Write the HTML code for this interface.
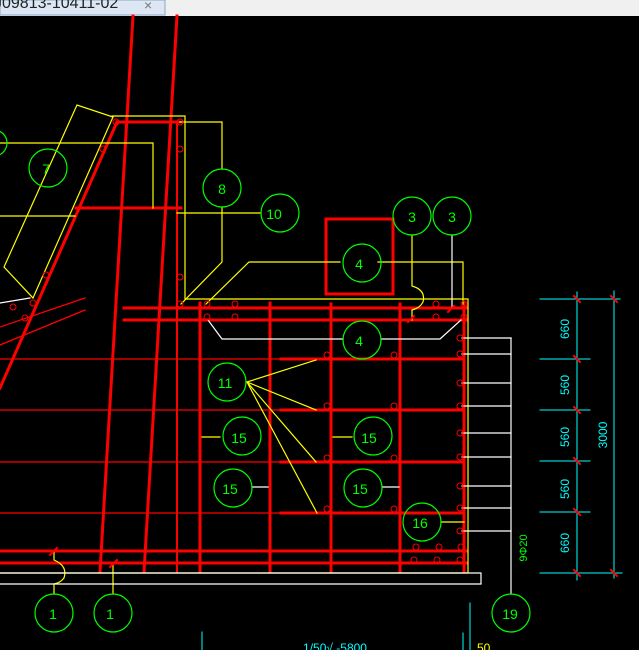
<!DOCTYPE html>
<html><head><meta charset="utf-8"><style>
html,body{margin:0;padding:0;background:#000;width:639px;height:650px;overflow:hidden}
svg{display:block}
text{font-family:"Liberation Sans",sans-serif}
</style></head><body>
<svg width="639" height="650" viewBox="0 0 639 650" xmlns="http://www.w3.org/2000/svg">
<rect x="0" y="0" width="639" height="650" fill="#000"/>
<rect x="0" y="0" width="639" height="16" fill="#f0f0f0"/>
<rect x="0" y="0" width="165" height="15" fill="#dce7f3" stroke="#8aa6c8"/>
<text x="-6" y="8" font-size="16" fill="#222" font-family="Liberation Mono,monospace">J09813-10411-02</text>
<text x="144" y="10" font-size="14" fill="#777">×</text>

<g fill="none" stroke-linecap="square">
<g stroke="#ff0000" stroke-width="1.3">
<line x1="0" y1="359" x2="283" y2="359"/>
<line x1="0" y1="410" x2="464" y2="410"/>
<line x1="0" y1="462" x2="464" y2="462"/>
<line x1="0" y1="513" x2="464" y2="513"/>
<line x1="0" y1="327" x2="85" y2="298"/>
<line x1="0" y1="345" x2="85" y2="310"/>
</g>
<g stroke="#ff0000" stroke-width="3">
<line x1="133" y1="16" x2="100" y2="572"/>
<line x1="177" y1="16" x2="144" y2="572"/>
<line x1="117" y1="122" x2="0" y2="388"/>
<line x1="117" y1="122" x2="180" y2="122"/>
<line x1="76" y1="208" x2="181" y2="208"/>
<line x1="124" y1="308" x2="466" y2="308"/>
<line x1="124" y1="320" x2="466" y2="320"/>
<line x1="281" y1="359" x2="464" y2="359"/>
<line x1="281" y1="410" x2="464" y2="410"/>
<line x1="281" y1="462" x2="464" y2="462"/>
<line x1="281" y1="513" x2="464" y2="513"/>
<line x1="0" y1="551" x2="466" y2="551"/>
<line x1="0" y1="563" x2="466" y2="563"/>
<line x1="200" y1="303" x2="200" y2="572"/>
<line x1="270" y1="303" x2="270" y2="572"/>
<line x1="331" y1="304" x2="331" y2="572"/>
<line x1="400" y1="304" x2="400" y2="571"/>
<line x1="464" y1="302" x2="464" y2="572"/>
<rect x="326" y="219" width="67" height="75"/>
</g>
<g stroke="#ff0000" stroke-width="2">
<line x1="177" y1="122" x2="177" y2="572"/>
</g>
<g stroke="#ffff00" stroke-width="1.2">
<polyline points="113,117 77,105 4,267 33,298"/>
<line x1="113" y1="117" x2="33" y2="298"/>
<polyline points="112,116 185,116 185,299 468,299 468,572"/>
<polyline points="0,143 153,143 153,208"/>
<line x1="0" y1="216" x2="75" y2="216"/>
<polyline points="180,122 222,122 222,169"/>
<polyline points="222,207 222,262 181,304"/>
<line x1="177" y1="213" x2="261" y2="213"/>
<polyline points="206,304 249,262 340,262"/>
<polyline points="378,262 463,262 463,304"/>
<path d="M412,235 V286 Q426,290 423,302 Q420,308 412,310 V320"/>
<line x1="247" y1="382" x2="316" y2="360"/>
<line x1="247" y1="382" x2="316" y2="410"/>
<line x1="247" y1="382" x2="316" y2="462"/>
<line x1="247" y1="382" x2="317" y2="513"/>
<line x1="202" y1="437" x2="220" y2="437"/>
<line x1="333" y1="437" x2="352" y2="437"/>
<line x1="441" y1="522" x2="464" y2="522"/>
<line x1="0" y1="573" x2="468" y2="573"/>
<path d="M54,551 V560 Q68,566 64,578 Q60,583 54,584 V594"/>
<line x1="113" y1="564" x2="113" y2="594"/>
</g>
<g stroke="#ffffff" stroke-width="1.2">
<line x1="452" y1="235" x2="452" y2="308"/>
<polyline points="208,320 222,339 343,339"/>
<polyline points="381,339 440,339 461,320"/>
<line x1="252" y1="487" x2="268" y2="487"/>
<line x1="383" y1="487" x2="399" y2="487"/>
<line x1="462" y1="338" x2="511" y2="338"/>
<line x1="462" y1="354" x2="511" y2="354"/>
<line x1="462" y1="383" x2="511" y2="383"/>
<line x1="462" y1="406" x2="511" y2="406"/>
<line x1="462" y1="433" x2="511" y2="433"/>
<line x1="462" y1="457" x2="511" y2="457"/>
<line x1="462" y1="486" x2="511" y2="486"/>
<line x1="462" y1="508" x2="511" y2="508"/>
<line x1="462" y1="531" x2="511" y2="531"/>
<line x1="511" y1="338" x2="511" y2="594"/>
<polyline points="0,573 481,573 481,584 0,584"/>
<line x1="0" y1="303" x2="30" y2="298"/>
</g>
<g stroke="#00ffff" stroke-width="1">
<line x1="577" y1="292" x2="577" y2="580"/>
<line x1="614" y1="291" x2="614" y2="578"/>
<line x1="540" y1="299" x2="620" y2="299"/>
<line x1="540" y1="359" x2="590" y2="359"/>
<line x1="540" y1="410" x2="590" y2="410"/>
<line x1="540" y1="461" x2="590" y2="461"/>
<line x1="540" y1="512" x2="590" y2="512"/>
<line x1="540" y1="573" x2="622" y2="573"/>
<line x1="202" y1="632" x2="202" y2="650"/>
<line x1="463" y1="633" x2="463" y2="650"/>
<line x1="470" y1="603" x2="470" y2="650"/>
</g>
<g stroke="#ff0000" stroke-width="2">
<line x1="574" y1="296" x2="580" y2="302"/><line x1="611" y1="296" x2="617" y2="302"/>
<line x1="574" y1="356" x2="580" y2="362"/><line x1="574" y1="407" x2="580" y2="413"/>
<line x1="574" y1="458" x2="580" y2="464"/><line x1="574" y1="509" x2="580" y2="515"/>
<line x1="574" y1="570" x2="580" y2="576"/><line x1="611" y1="570" x2="617" y2="576"/>
<line x1="50" y1="555" x2="57" y2="548"/><line x1="110" y1="567" x2="117" y2="560"/>
<line x1="408" y1="322" x2="414" y2="316"/><line x1="448" y1="312" x2="454" y2="306"/>
</g>
<g stroke="#ff0000" stroke-width="1">
<circle cx="116" cy="122" r="3"/><circle cx="180" cy="122" r="3"/><circle cx="103" cy="149" r="3"/><circle cx="180" cy="149" r="3"/>
<circle cx="180" cy="277" r="3"/><circle cx="180" cy="304" r="3"/><circle cx="46" cy="275" r="3"/><circle cx="33" cy="303" r="3"/>
<circle cx="13" cy="307" r="3"/><circle cx="25" cy="318" r="3"/>
<circle cx="207" cy="304" r="3"/><circle cx="235" cy="304" r="3"/><circle cx="207" cy="317" r="3"/><circle cx="235" cy="317" r="3"/>
<circle cx="436" cy="304" r="3"/><circle cx="436" cy="317" r="3"/><circle cx="464" cy="304" r="3"/><circle cx="464" cy="317" r="3"/>
<circle cx="327" cy="355" r="3"/><circle cx="394" cy="355" r="3"/><circle cx="327" cy="406" r="3"/><circle cx="394" cy="406" r="3"/>
<circle cx="327" cy="458" r="3"/><circle cx="394" cy="458" r="3"/><circle cx="327" cy="509" r="3"/><circle cx="394" cy="509" r="3"/>
<circle cx="460" cy="338" r="3"/><circle cx="460" cy="354" r="3"/><circle cx="460" cy="383" r="3"/><circle cx="460" cy="406" r="3"/>
<circle cx="460" cy="433" r="3"/><circle cx="460" cy="457" r="3"/><circle cx="460" cy="486" r="3"/><circle cx="460" cy="508" r="3"/><circle cx="460" cy="531" r="3"/>
<circle cx="416" cy="547" r="3"/><circle cx="439" cy="547" r="3"/><circle cx="461" cy="547" r="3"/>
<circle cx="414" cy="560" r="3"/><circle cx="437" cy="560" r="3"/><circle cx="460" cy="560" r="3"/>
</g>
<g stroke="#00ff00" stroke-width="1.2">
<circle cx="-6" cy="143" r="13"/>
<circle cx="48" cy="168" r="19"/>
<circle cx="222" cy="188" r="19"/>
<circle cx="280" cy="213" r="19"/>
<circle cx="412" cy="216" r="19"/>
<circle cx="452" cy="216" r="19"/>
<circle cx="362" cy="263" r="19"/>
<circle cx="362" cy="340" r="19"/>
<circle cx="227" cy="382" r="19"/>
<circle cx="242" cy="436" r="19"/>
<circle cx="373" cy="436" r="19"/>
<circle cx="233" cy="488" r="19"/>
<circle cx="363" cy="488" r="19"/>
<circle cx="422" cy="522" r="19"/>
<circle cx="54" cy="613" r="19"/>
<circle cx="113" cy="613" r="19"/>
<circle cx="511" cy="613" r="19"/>
</g>
</g>
<g fill="#00ff00" font-size="14" text-anchor="middle">
<text x="46" y="174">7</text><text x="222" y="194">8</text><text x="274" y="219">10</text>
<text x="412" y="222">3</text><text x="452" y="222">3</text><text x="359" y="269">4</text><text x="359" y="346">4</text>
<text x="225" y="388">11</text><text x="239" y="443">15</text><text x="369" y="443">15</text>
<text x="230" y="494">15</text><text x="360" y="494">15</text><text x="420" y="528">16</text>
<text x="53" y="619">1</text><text x="110" y="619">1</text><text x="510" y="619">19</text>
<text transform="translate(527,548) rotate(-90)" font-size="11">9Φ20</text>
</g>
<g fill="#00ffff" font-size="12" text-anchor="middle">
<text transform="translate(569,329) rotate(-90)">660</text>
<text transform="translate(569,385) rotate(-90)">560</text>
<text transform="translate(569,437) rotate(-90)">560</text>
<text transform="translate(569,489) rotate(-90)">560</text>
<text transform="translate(569,543) rotate(-90)">660</text>
<text transform="translate(607,435) rotate(-90)">3000</text>
<text x="335" y="652">1/50√ -5800</text>
</g>
<text x="477" y="652" font-size="12" fill="#ffff00">50</text>
</svg>
</body></html>
